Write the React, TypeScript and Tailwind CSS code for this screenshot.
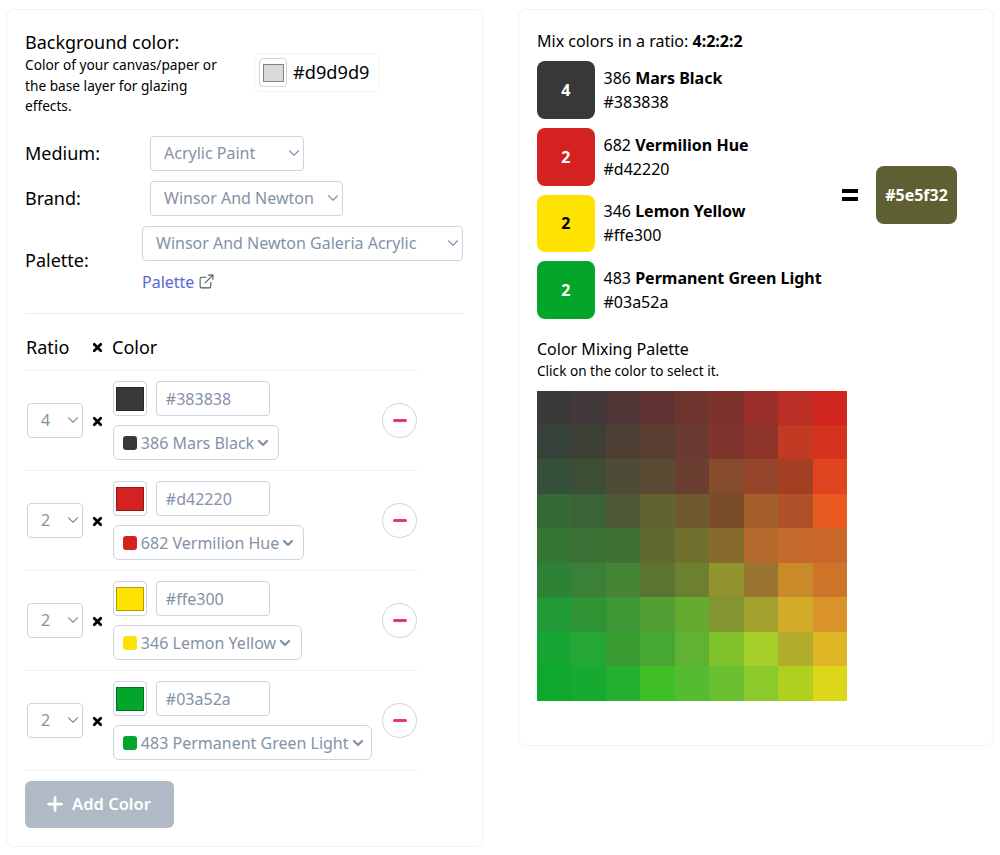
import { ChevronDown, ExternalLink, Plus, X } from 'lucide-react'

const COLORS = [
  { ratio: 4, code: '386', name: 'Mars Black', hex: '#383838', selectWidth: 'w-[166px]', textClass: 'text-white' },
  { ratio: 2, code: '682', name: 'Vermilion Hue', hex: '#d42220', selectWidth: 'w-[191px]', textClass: 'text-white' },
  { ratio: 2, code: '346', name: 'Lemon Yellow', hex: '#ffe300', selectWidth: 'w-[189px]', textClass: 'text-black' },
  { ratio: 2, code: '483', name: 'Permanent Green Light', hex: '#03a52a', selectWidth: 'w-[259px]', textClass: 'text-white' },
]

const PALETTE = [
  ['#3a3a38', '#41393a', '#4f3536', '#5e3332', '#6d352e', '#7d322c', '#9c2e2a', '#ba2e25', '#d12620'],
  ['#34423a', '#3f4035', '#4d3f34', '#5a3e32', '#6b3b32', '#7f352e', '#8f3428', '#c23a24', '#d4331f'],
  ['#345038', '#3d4e37', '#4e4c36', '#5a4a33', '#6b3e32', '#854b2c', '#95452a', '#a53f24', '#e04420'],
  ['#356a36', '#3a6337', '#4e5836', '#62642f', '#6f5a30', '#784d28', '#a55f2d', '#b05028', '#e85a22'],
  ['#367634', '#3d7236', '#407032', '#5e6a30', '#72702f', '#86692c', '#b5692c', '#c56a2c', '#c9682a'],
  ['#2d8236', '#3b8038', '#458636', '#5b7530', '#6c8030', '#91932e', '#997430', '#c98a2a', '#ce7428'],
  ['#1f9a36', '#2f9233', '#3d9735', '#549f33', '#65ab2f', '#82952f', '#a3a22e', '#d3ab28', '#da922a'],
  ['#17a634', '#24a734', '#389c30', '#47a733', '#60b332', '#80c22c', '#a6ce28', '#b1ac2c', '#deb524'],
  ['#0ea82d', '#16ab30', '#24b02e', '#40bf28', '#55bb30', '#6abf30', '#8cca2c', '#b0d020', '#dcd718'],
]

function SelectBox({ value, className }: { value: string; className: string }) {
  return (
    <div className={`flex items-center justify-between h-[35px] pl-[13px] bg-white border border-[#cbd5e0] rounded text-[#8492a6] text-[16px] ${className}`}>
      <span className="whitespace-nowrap">{value}</span>
      <ChevronDown className="h-[18px] w-[18px] text-[#8492a6]" strokeWidth={1.5} />
    </div>
  )
}

function MixRow({ color }: { color: (typeof COLORS)[number] }) {
  return (
    <div className="flex items-center h-[100px] border-b border-dotted border-[#e2e8f0] pl-[2px]">
      <div className="flex items-center justify-between w-[56px] h-[35px] pl-[13px] border border-[#cbd5e0] rounded text-[#8492a6] text-[16px]">
        <span>{color.ratio}</span>
        <ChevronDown className="h-[18px] w-[18px]" strokeWidth={1.5} />
      </div>
      <X className="h-[13px] w-[13px] ml-[8px] mr-[9px] mt-[3px] text-black" strokeWidth={5} />
      <div className="flex flex-col gap-[9px] pt-[1px] w-[269px]">
        <div className="flex items-center gap-[9px]">
          <div className="flex items-center justify-center h-[35px] w-[34px] border border-[#cbd5e0] rounded">
            <div className="h-[24px] w-[28px] border border-black/30" style={{ backgroundColor: color.hex }} />
          </div>
          <div className="flex items-center h-[35px] w-[114px] pl-[9px] border border-[#cbd5e0] rounded text-[#8492a6] text-[16px]">
            {color.hex}
          </div>
        </div>
        <div className={`flex items-center h-[35px] pl-[9px] border border-[#cbd5e0] rounded-md text-[#8492a6] text-[16px] ${color.selectWidth}`}>
          <span className="h-[14px] w-[14px] rounded-[3px] mr-[4px] shrink-0" style={{ backgroundColor: color.hex }} />
          <span className="whitespace-nowrap">{color.code} {color.name}</span>
          <ChevronDown className="h-[16px] w-[16px] ml-[1px]" strokeWidth={3.5} />
        </div>
      </div>
      <div className="flex items-center justify-center h-[35px] w-[35px] ml-[1px] rounded-full border border-[#cbd5e0]">
        <div className="h-[3px] w-[14px] rounded-full bg-[#e8395f]" />
      </div>
    </div>
  )
}

export default function App() {
  return (
    <div
      className="flex items-start gap-[35px] pt-[9px] pl-[6px] min-h-[855px] bg-white text-black"
      style={{ fontFamily: '"Noto Sans", sans-serif' }}
    >
      {/* Inputs */}
      <div className="w-[477px] h-[838px] px-[18px] pt-[19px] border border-[#f1f3f6] rounded-lg">
        <div className="flex">
          <div className="w-[209px]">
            <div className="text-[18px] leading-[26px]">Background color:</div>
            <p className="text-[13.7px] leading-[20.6px]">
              Color of your canvas/paper or the base layer for glazing effects.
            </p>
          </div>
          <div className="flex items-center h-[39px] w-[126px] ml-[20px] mt-[24px] px-[4px] gap-[6px] border border-[#f1f3f6] rounded-md">
            <div className="flex items-center justify-center h-[29px] w-[28px] border border-[#cbd5e0] rounded">
              <div className="h-[18px] w-[21px] bg-[#d9d9d9] border border-black/40" />
            </div>
            <span className="text-[18.2px]">#d9d9d9</span>
          </div>
        </div>

        <div className="flex items-center mt-[19px] h-[35px]">
          <span className="w-[125px] text-[18px]">Medium:</span>
          <SelectBox value="Acrylic Paint" className="w-[154px]" />
        </div>
        <div className="flex items-center mt-[10px] h-[35px]">
          <span className="w-[125px] text-[18px]">Brand:</span>
          <SelectBox value="Winsor And Newton" className="w-[193px]" />
        </div>
        <div className="flex items-center mt-[10px]">
          <span className="w-[117px] text-[18px] mt-[1px]">Palette:</span>
          <div>
            <SelectBox value="Winsor And Newton Galeria Acrylic" className="w-[321px]" />
            <div className="flex items-center gap-[4px] mt-[9px] h-[24px] text-[16px] text-[#5a67d8]">
              Palette
              <ExternalLink className="h-[17px] w-[17px] text-[#4a5568]" strokeWidth={1.5} />
            </div>
          </div>
        </div>

        <div className="mt-[19px] border-t border-[#e8ecf1]" />

        <div className="w-[392px]">
          <div className="flex items-center h-[57px] pt-[11px] pl-[1px] border-b border-dotted border-[#e2e8f0] text-[18px]">
            <span className="w-[65px]">Ratio</span>
            <X className="h-[13px] w-[13px] mr-[8px] mt-[1px]" strokeWidth={5} />
            <span>Color</span>
          </div>
          {COLORS.map((c) => (
            <MixRow key={c.code} color={c} />
          ))}
        </div>

        <button className="flex items-center justify-center gap-[6px] h-[47px] w-[149px] mt-[10px] pr-[4px] rounded-md bg-[#b0bac7] text-white text-[16.5px] font-semibold">
          <Plus className="h-[22px] w-[22px]" strokeWidth={3} />
          Add Color
        </button>
      </div>

      {/* Result */}
      <div className="w-[476px] h-[737px] px-[18px] pt-[19px] border border-[#f1f3f6] rounded-lg">
        <div className="text-[16px] leading-[24px]">
          Mix colors in a ratio: <b>4:2:2:2</b>
        </div>
        <div className="flex items-center mt-[8.3px]">
          <div className="flex flex-col gap-[9px] w-[305px]">
            {COLORS.map((c) => (
              <div key={c.code} className="flex items-center gap-[9px]">
                <div
                  className={`flex items-center justify-center h-[57.67px] w-[57.5px] rounded-lg text-[16px] font-bold ${c.textClass}`}
                  style={{ backgroundColor: c.hex }}
                >
                  {c.ratio}
                </div>
                <div className="text-[16px] leading-[24px]">
                  <div>
                    {c.code} <b>{c.name}</b>
                  </div>
                  <div>{c.hex}</div>
                </div>
              </div>
            ))}
          </div>
          <div className="h-[12px] w-[16px] mt-[9px] border-y-[4px] border-black" />
          <div className="flex items-center justify-center h-[58px] w-[81px] ml-[18px] mt-[9px] rounded-lg bg-[#5e5f32] text-white text-[16px] font-bold">
            #5e5f32
          </div>
        </div>

        <div className="mt-[19px] text-[16px] leading-[23px]">Color Mixing Palette</div>
        <div className="text-[13.6px] leading-[20px]">Click on the color to select it.</div>
        <div className="grid grid-cols-9 w-[310px] h-[310px] mt-[9.7px]">
          {PALETTE.flat().map((hex, i) => (
            <div key={i} style={{ backgroundColor: hex }} />
          ))}
        </div>
      </div>
    </div>
  )
}
